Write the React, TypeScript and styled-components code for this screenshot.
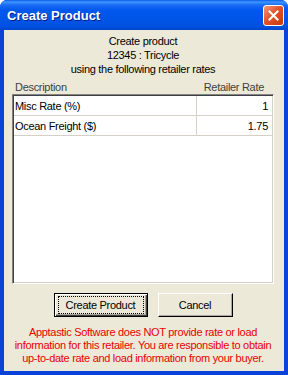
import React from 'react';
import styled, { createGlobalStyle } from 'styled-components';

interface RateRow {
  label: string;
  value: string;
}

const rates: RateRow[] = [
  { label: 'Misc Rate (%)', value: '1' },
  { label: 'Ocean Freight ($)', value: '1.75' },
];

const GlobalStyle = createGlobalStyle`
  html, body {
    margin: 0;
    padding: 0;
    background: #ffffff;
  }
  body {
    font-family: 'Liberation Sans', Arial, sans-serif;
    font-size: 11px;
    letter-spacing: -0.3px;
  }
`;

const Window = styled.div`
  width: 288px;
  height: 375px;
  display: flex;
  flex-direction: column;
  background: #0842d6;
  border-radius: 7px 7px 0 0;
  overflow: hidden;
`;

const TitleBar = styled.div`
  height: 30px;
  flex: none;
  display: flex;
  align-items: center;
  justify-content: space-between;
  padding: 0 4px 0 7px;
  background: linear-gradient(
    to bottom,
    #0a5ce8 0px,
    #3d95ff 2px,
    #1a6cf4 5px,
    #0058ee 10px,
    #0054e6 20px,
    #0050dd 27px,
    #0045c8 30px
  );
  box-sizing: border-box;
`;

const Title = styled.span`
  color: #ffffff;
  font-weight: bold;
  font-size: 13px;
  letter-spacing: 0;
  text-shadow: 1px 1px 0 #0a1e80;
`;

const CloseButton = styled.div`
  width: 21px;
  height: 21px;
  box-sizing: border-box;
  border: 1px solid #ffffff;
  border-radius: 3px;
  background: linear-gradient(135deg, #f29a7c 0%, #e2542c 45%, #c8380e 100%);
  display: flex;
  align-items: center;
  justify-content: center;
  margin-top: 1px;
`;

const Frame = styled.div`
  flex: 1;
  display: flex;
  padding: 0 4px 4px 4px;
  background: #0842d6;
`;

const Body = styled.div`
  flex: 1;
  background: #ece9d8;
  display: flex;
  flex-direction: column;
  align-items: stretch;
  padding: 4px 10px 0 8px;
  color: #000000;
`;

const Intro = styled.div`
  text-align: center;
  line-height: 14px;
`;

const HeaderRow = styled.div`
  display: flex;
  justify-content: space-between;
  line-height: 14px;
  padding: 4px 10px 0 3px;
  color: #404040;
`;

const Table = styled.div`
  height: 190px;
  box-sizing: border-box;
  background: #ffffff;
  border-top: 1px solid #848284;
  border-left: 1px solid #848284;
  border-right: 1px solid #ffffff;
  border-bottom: 1px solid #ffffff;
  box-shadow: inset 1px 1px 0 #404040, inset -1px -1px 0 #d4d0c8;
  display: flex;
  flex-direction: column;
  padding: 1px 1px 0 1px;
`;

const Row = styled.div`
  display: grid;
  grid-template-columns: 183px 1fr;
  height: 20px;
  border-bottom: 1px solid #d4d0c8;
  box-sizing: border-box;
`;

const Cell = styled.div<{ $right?: boolean }>`
  display: flex;
  align-items: center;
  justify-content: ${(p) => (p.$right ? 'flex-end' : 'flex-start')};
  padding: ${(p) => (p.$right ? '0 4px 0 0' : '0 0 0 1px')};
  border-right: ${(p) => (p.$right ? 'none' : '1px solid #d4d0c8')};
  font-size: 11px;
`;

const ButtonRow = styled.div`
  display: flex;
  justify-content: center;
  gap: 10px;
  margin-top: 9px;
`;

const Button = styled.button<{ $default?: boolean; $width: number }>`
  width: ${(p) => p.$width}px;
  height: 24px;
  box-sizing: border-box;
  font-family: 'Liberation Sans', Arial, sans-serif;
  font-size: 11px;
  letter-spacing: -0.3px;
  color: #000000;
  background: #ece9d8;
  border: 1px solid ${(p) => (p.$default ? '#000000' : '#ece9d8')};
  border-top-color: ${(p) => (p.$default ? '#000000' : '#ffffff')};
  border-left-color: ${(p) => (p.$default ? '#000000' : '#ffffff')};
  border-right-color: #000000;
  border-bottom-color: #000000;
  box-shadow: ${(p) =>
    p.$default
      ? 'inset 1px 1px 0 #ffffff, inset -1px -1px 0 #404040, inset -2px -2px 0 #aca899'
      : 'inset -1px -1px 0 #aca899'};
  padding: 0;
  display: flex;
  align-items: center;
  justify-content: center;
`;

const FocusLabel = styled.span`
  outline: 1px dotted #000000;
  outline-offset: 0;
  padding: 2px 3px;
  width: calc(100% - 8px);
  box-sizing: border-box;
  text-align: center;
`;

const Warning = styled.div`
  margin-top: 9px;
  text-align: center;
  color: #e80000;
  line-height: 13px;
  font-size: 11px;
  white-space: nowrap;
`;

const App: React.FC = () => {
  return (
    <>
      <GlobalStyle />
      <Window>
        <TitleBar>
          <Title>Create Product</Title>
          <CloseButton>
            <svg width="11" height="11" viewBox="0 0 11 11">
              <path
                d="M1.5 1.5 L9.5 9.5 M9.5 1.5 L1.5 9.5"
                stroke="#ffffff"
                strokeWidth="2"
                strokeLinecap="square"
              />
            </svg>
          </CloseButton>
        </TitleBar>
        <Frame>
          <Body>
            <Intro>
              <div>Create product</div>
              <div>12345 : Tricycle</div>
              <div>using the following retailer rates</div>
            </Intro>
            <HeaderRow>
              <span>Description</span>
              <span>Retailer Rate</span>
            </HeaderRow>
            <Table>
              {rates.map((r) => (
                <Row key={r.label}>
                  <Cell>{r.label}</Cell>
                  <Cell $right>{r.value}</Cell>
                </Row>
              ))}
            </Table>
            <ButtonRow>
              <Button $default $width={94}>
                <FocusLabel>Create Product</FocusLabel>
              </Button>
              <Button $width={75}>Cancel</Button>
            </ButtonRow>
            <Warning>
              Apptastic Software does NOT provide rate or load
              <br />
              information for this retailer. You are responsible to obtain
              <br />
              up-to-date rate and load information from your buyer.
            </Warning>
          </Body>
        </Frame>
      </Window>
    </>
  );
};

export default App;
